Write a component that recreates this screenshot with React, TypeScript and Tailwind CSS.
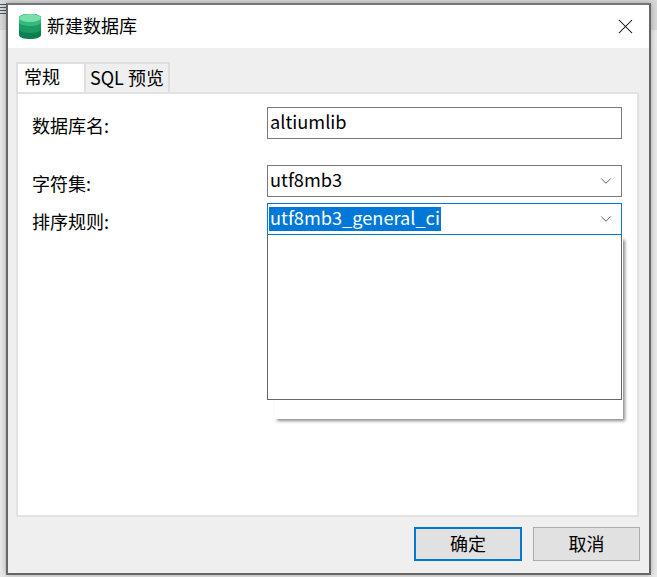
import { ChevronDown, X } from 'lucide-react';

const font = { fontFamily: '"Segoe UI", "Noto Sans CJK SC", sans-serif' };

function DbIcon() {
  return (
    <svg width="22" height="25" viewBox="0 0 22 25" className="shrink-0">
      <path d="M0 4C0 1.500 5 0 11 0s11 1.500 11 4v17c0 2.500-5 4-11 4S0 23.500 0 21z" fill="#0b7f50" />
      <path d="M0 4C0 1.500 5 0 11 0s11 1.500 11 4v11c0 2.500-5 4-11 4S0 17.500 0 15z" fill="#1b9a62" />
      <path d="M0 4C0 1.500 5 0 11 0s11 1.500 11 4v4c0 2.500-5 4-11 4S0 10.500 0 8z" fill="#2fbb78" />
      <ellipse cx="11" cy="4" rx="11" ry="4" fill="#77e0a8" />
    </svg>
  );
}

function Field({ label, value, select, focus, className }: { label: string; value: string; select?: boolean; focus?: boolean; className?: string }) {
  return (
    <div className={`flex items-center ${className ?? ''}`}>
      <div className="w-[235px] text-[18px] text-black leading-none pt-1">{label}</div>
      <div className={`w-[355px] h-[32px] bg-white border flex items-center pl-[1px] pr-[6px] justify-between ${focus ? 'border-[#0078d7]' : 'border-[#7a7a7a]'}`}>
        <span className={`text-[18.2px] leading-[24px] px-px ${focus ? 'bg-[#0078d7] text-white' : 'text-black'}`}>
          <span className="relative -top-[2px]">{value}</span>
        </span>
        {select && <ChevronDown size={18} strokeWidth={1.1} className="text-[#444]" />}
      </div>
    </div>
  );
}

export default function App() {
  return (
    <div className="relative w-[657px] h-[577px] overflow-hidden bg-[#e9e9e9] pl-[6px] pt-[3px]" style={font}>
      {/* desktop behind the dialog */}
      <div className="absolute inset-x-0 top-0 h-[30px] bg-[#d9d9d9]" />
      <div className="absolute left-0 top-[4px] w-[6px] h-[14px] flex flex-col gap-[2px]">
        <div className="h-px bg-[#44586e]" />
        <div className="h-px bg-[#44586e]" />
        <div className="h-px bg-[#44586e]" />
        <div className="h-px bg-[#44586e]" />
      </div>
      <div className="relative w-[645px] h-[572px] flex flex-col bg-[#efefef] border-2 border-[#666] border-t-[#777] shadow-[0_0_6px_rgba(0,0,0,0.3)]">
        <div className="h-[43px] shrink-0 bg-white flex items-center pl-[11px] pr-[11px]">
          <DbIcon />
          <span className="ml-[6px] text-[18px] text-black leading-none relative -top-[2px]">新建数据库</span>
          <X size={25} strokeWidth={1} className="ml-auto text-black" />
        </div>
        <div className="flex-1 flex flex-col pl-[8px] pr-[10px]">
          <div className="flex items-end h-[44px] shrink-0">
            <div className="w-[70px] h-[32px] bg-white border-2 border-b-0 border-[#dedede] text-[18px] text-black pl-[6px] leading-[25px] relative top-[2px]">常规</div>
            <div className="w-[84px] h-[30px] bg-[#efefef] border-2 border-l-0 border-b-0 border-[#dedede] text-[18px] text-black pl-[4px] leading-[26px]">SQL 预览</div>
          </div>
          <div className="relative h-[425px] bg-white border-2 border-[#e2e2e2] pt-[13px] pl-[14px]">
            <Field label="数据库名:" value="altiumlib" />
            <Field label="字符集:" value="utf8mb3" select className="mt-[26px]" />
            <Field label="排序规则:" value="utf8mb3_general_ci" select focus className="mt-[6px]" />
            <div className="absolute left-[257px] top-[144px] w-[348px] h-[181px] bg-white shadow-[2px_2px_3px_rgba(0,0,0,0.45)]" />
            <div className="absolute left-[249px] top-[141px] w-[355px] h-[165px] bg-white border border-t-0 border-[#666]" />
          </div>
          <div className="flex justify-end gap-[11px] mt-[10px] mr-[-1px]">
            <div className="w-[108px] h-[34px] bg-[#e1e1e1] border-2 border-[#0078d7] flex items-center justify-center text-[18px] text-black pb-[2px]">确定</div>
            <div className="w-[107px] h-[34px] bg-[#e1e1e1] border border-[#adadad] flex items-center justify-center text-[18px] text-black pb-[2px]">取消</div>
          </div>
        </div>
      </div>
    </div>
  );
}
